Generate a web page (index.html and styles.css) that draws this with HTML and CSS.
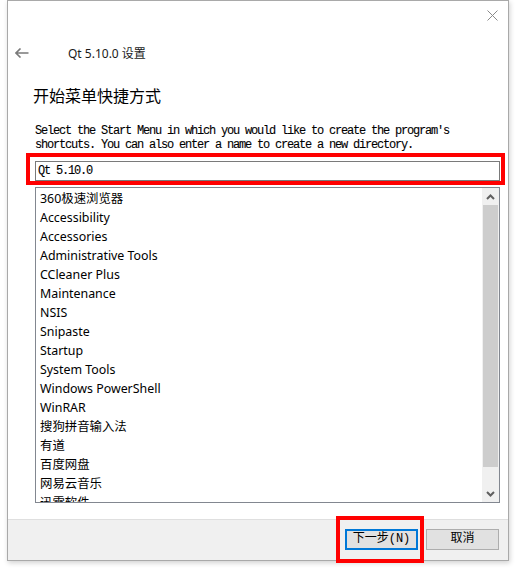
FILE: index.html
```html
<!DOCTYPE html>
<html>
<head>
<meta charset="utf-8">
<link rel="stylesheet" href="styles.css">
</head>
<body>
<div class="page">
  <div class="window">
    <div class="titlebar">
      <svg class="close" width="11" height="11" viewBox="0 0 11 11"><path d="M0.5 0.5 L10.5 10.5 M10.5 0.5 L0.5 10.5" stroke="#8a8a8a" stroke-width="1" fill="none"/></svg>
    </div>
    <div class="nav">
      <svg class="back" width="14" height="10" viewBox="0 0 14 10"><path d="M1 5 H13.5 M5.5 0.5 L1 5 L5.5 9.5" stroke="#7a7a7a" stroke-width="1.6" fill="none"/></svg>
      <span class="title">Qt 5.10.0 设置</span>
    </div>
    <div class="content">
      <h1 class="heading">开始菜单快捷方式</h1>
      <p class="desc">Select the Start Menu in which you would like to create the program's<br>shortcuts. You can also enter a name to create a new directory.</p>
      <div class="input">Qt 5.10.0</div>
      <div class="list">
        <div class="items">
          <div class="item">360极速浏览器</div>
          <div class="item">Accessibility</div>
          <div class="item">Accessories</div>
          <div class="item">Administrative Tools</div>
          <div class="item">CCleaner Plus</div>
          <div class="item">Maintenance</div>
          <div class="item">NSIS</div>
          <div class="item">Snipaste</div>
          <div class="item">Startup</div>
          <div class="item">System Tools</div>
          <div class="item">Windows PowerShell</div>
          <div class="item">WinRAR</div>
          <div class="item">搜狗拼音输入法</div>
          <div class="item">有道</div>
          <div class="item">百度网盘</div>
          <div class="item">网易云音乐</div>
          <div class="item">迅雷软件</div>
        </div>
        <div class="scrollbar">
          <div class="sb-btn"><svg width="9" height="6" viewBox="0 0 9 6"><path d="M1 5 L4.5 1.5 L8 5" stroke="#606060" stroke-width="2" fill="none"/></svg></div>
          <div class="sb-thumb"></div>
          <div class="sb-track"></div>
          <div class="sb-btn"><svg width="9" height="6" viewBox="0 0 9 6"><path d="M1 1 L4.5 4.5 L8 1" stroke="#606060" stroke-width="2" fill="none"/></svg></div>
        </div>
      </div>
    </div>
    <div class="footer">
      <button class="btn btn-default">下一步(N)</button>
      <button class="btn">取消</button>
    </div>
  </div>
  <div class="mark mark-input"></div>
  <div class="mark mark-btn"></div>
</div>
</body>
</html>
```
FILE: styles.css
```css
html, body {
  margin: 0;
  padding: 0;
  background: #ffffff;
}
.page {
  position: relative;
  width: 516px;
  height: 568px;
}
.window {
  margin-left: 7px;
  width: 502px;
  height: 561px;
  box-sizing: border-box;
  border: 1px solid #a9a9a9;
  background: #ffffff;
  box-shadow: 1px 2px 5px rgba(0,0,0,0.18);
  display: flex;
  flex-direction: column;
}
.titlebar {
  height: 29px;
  display: flex;
  justify-content: flex-end;
  align-items: center;
  padding-right: 10px;
}
.close { display: block; }
.nav {
  height: 46px;
  display: flex;
  align-items: center;
  padding-left: 7px;
}
.back { display: block; }
.title {
  margin-left: 39px;
  font-family: "Noto Sans", "Noto Sans CJK SC", sans-serif;
  font-size: 12px;
  color: #1a1a1a;
}
.content {
  padding-left: 27px;
  padding-right: 8px;
}
.heading {
  margin: 7px 0 0 -2px;
  height: 24px;
  line-height: 24px;
  font-family: "Noto Sans CJK SC", sans-serif;
  font-weight: normal;
  font-size: 16px;
  color: #000;
}
.desc {
  margin: 17px 0 0 0;
  font-family: "Liberation Mono", monospace;
  font-size: 12px;
  letter-spacing: -1.2px;
  line-height: 14px;
  height: 28px;
  color: #000;
  white-space: nowrap;
  -webkit-text-stroke: 0.1px #000;
}
.input {
  margin-top: 9px;
  height: 20px;
  box-sizing: border-box;
  border: 1px solid #7a7a7a;
  padding-left: 2px;
  font-family: "Liberation Mono", monospace;
  font-size: 12px;
  letter-spacing: -1.2px;
  line-height: 18px;
  color: #000;
  -webkit-text-stroke: 0.1px #000;
}
.list {
  margin-top: 6px;
  height: 316px;
  box-sizing: border-box;
  border: 1px solid #828790;
  display: flex;
  overflow: hidden;
}
.items {
  flex: 1;
  overflow: hidden;
  padding: 1px 0 0 4px;
}
.item {
  height: 19px;
  line-height: 19px;
  font-family: "Noto Sans", "Noto Sans CJK SC", sans-serif;
  font-size: 12.4px;
  color: #000;
  white-space: nowrap;
}
.scrollbar {
  width: 17px;
  display: flex;
  flex-direction: column;
  background: #f0f0f0;
}
.sb-btn {
  height: 17px;
  display: flex;
  align-items: center;
  justify-content: center;
  background: #f0f0f0;
}
.sb-btn svg { display: block; }
.sb-thumb {
  height: 262px;
  margin: 0 1px;
  background: #cdcdcd;
}
.sb-track { flex: 1; }
.footer {
  margin-top: 16px;
  flex: 1;
  border-top: 1px solid #dfdfdf;
  background: #f0f0f0;
  display: flex;
  justify-content: flex-end;
  align-items: flex-start;
  gap: 8px;
  padding: 9px 9px 0 0;
}
.btn {
  width: 73px;
  height: 21px;
  box-sizing: border-box;
  margin: 0;
  padding: 0;
  border: 1px solid #adadad;
  background: #e1e1e1;
  font-family: "Liberation Mono", "Noto Sans CJK SC", monospace;
  font-size: 12px;
  color: #000;
  line-height: 19px;
}
.btn-default {
  border: 2px solid #0078d7;
  line-height: 17px;
}
.mark {
  position: absolute;
  box-sizing: border-box;
  border: 4px solid #ff0000;
}
.mark-input {
  left: 26px;
  top: 153px;
  width: 479px;
  height: 32px;
}
.mark-btn {
  left: 336px;
  top: 516px;
  width: 88px;
  height: 47px;
}
```
